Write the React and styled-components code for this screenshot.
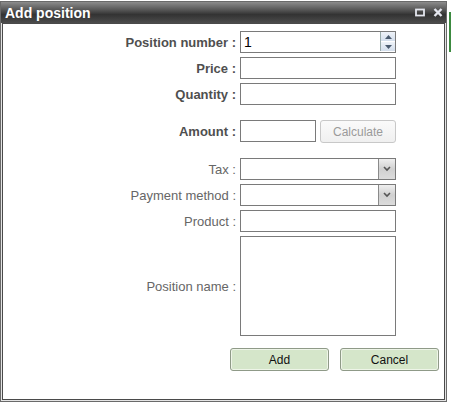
import React from "react";
import styled, {createGlobalStyle} from "styled-components";

const GlobalStyle = createGlobalStyle`
    html, body {
        margin: 0;
        padding: 0;
        background: #ffffff;
    }
    body {
        font-family: "Liberation Sans", Arial, sans-serif;
    }
`;

const Page = styled.div`
    width: 451px;
    height: 404px;
    background: #fff linear-gradient(#3c8a40, #3c8a40) no-repeat 449px 12px / 2px 40px;
    padding-top: 1px;
    box-sizing: border-box;
`;

const Window = styled.div`
    width: 447px;
    height: 401px;
    box-sizing: border-box;
    border: 1px solid #6a6a6a;
    padding: 0 1px 1px 1px;
    background: #e4e4e4;
    display: flex;
    flex-direction: column;
`;

const TitleBar = styled.div`
    height: 21px;
    display: flex;
    align-items: center;
    justify-content: space-between;
    padding: 0 3px 0 4px;
    margin: 0 -1px;
    background: linear-gradient(#8c8c8c 0%, #5a5a5a 35%, #333 60%, #4c4c4c 100%);
`;

const Title = styled.span`
    color: #fff;
    font-weight: bold;
    font-size: 14px;
`;

const Tools = styled.div`
    display: flex;
    gap: 8px;
    align-items: center;
`;

const Content = styled.div`
    flex: 1;
    border: 1px solid #4a4a4a;
    background: #fff;
    padding: 7px 3px 0 0;
    box-sizing: border-box;
`;

const Form = styled.div`
    display: grid;
    grid-template-columns: 233px 156px;
    column-gap: 4px;
    row-gap: 4px;
    align-items: center;
`;

const Label = styled.label`
    text-align: right;
    font-size: 13px;
    color: ${p => (p.$strong ? "#4f4f4f" : "#666")};
    font-weight: ${p => (p.$strong ? "bold" : "normal")};
    margin-top: ${p => p.$gap || 0}px;
`;

const Field = styled.div`
    position: relative;
    display: flex;
    gap: 4px;
    margin-top: ${p => p.$gap || 0}px;
`;

const Input = styled.div`
    box-sizing: border-box;
    width: ${p => p.$w || 156}px;
    height: ${p => p.$h || 22}px;
    border: 1px solid #7a7a7a;
    background: #fff;
    font-size: 14px;
    color: #000;
    padding: 3px 3px;
    line-height: 14px;
`;

const Spinner = styled.div`
    position: absolute;
    right: 1px;
    top: 1px;
    display: flex;
    flex-direction: column;
    gap: 1px;
    border-left: 1px solid #9aa;
`;

const SpinButton = styled.div`
    width: 14px;
    height: 9px;
    background: linear-gradient(#eef2f8, #d3deec);
    display: flex;
    align-items: center;
    justify-content: center;
`;

const DropArrow = styled.div`
    position: absolute;
    right: 1px;
    top: 1px;
    width: 17px;
    height: 20px;
    border-left: 1px solid #8a8a8a;
    box-sizing: border-box;
    background: linear-gradient(#efefef, #d0d0d0 50%, #dcdcdc);
    display: flex;
    align-items: center;
    justify-content: center;
`;

const Button = styled.button`
    box-sizing: border-box;
    width: ${p => p.$w || 99}px;
    height: 23px;
    border-radius: 3px;
    font-family: "Liberation Sans", Tahoma, sans-serif;
    font-size: 12px;
    padding: 0;
    border: 1px solid ${p => (p.$disabled ? "#c8c8c8" : "#8f9a88")};
    background: ${p => (p.$disabled ? "linear-gradient(#fafafa, #f0f0f0)" : "#d5e6ca")};
    color: ${p => (p.$disabled ? "#9a9a9a" : "#111")};
    box-shadow: ${p => (p.$disabled ? "none" : "inset 0 0 0 1px #eef5e8")};
`;

const Footer = styled.div`
    display: flex;
    justify-content: flex-end;
    gap: 11px;
    padding-right: 2px;
    margin-top: 12px;
`;

const TriUp = () => (
    <svg width="7" height="4" viewBox="0 0 7 4"><path d="M0 4 L3.5 0 L7 4 Z" fill="#4a5a6e"/></svg>
);

const TriDown = () => (
    <svg width="7" height="4" viewBox="0 0 7 4"><path d="M0 0 L3.5 4 L7 0 Z" fill="#4a5a6e"/></svg>
);

const Chevron = () => (
    <svg width="8" height="6" viewBox="0 0 8 6"><path d="M1 1 L4 4 L7 1" stroke="#555" strokeWidth="1.6" fill="none"/></svg>
);

const App = () => (
    <>
        <GlobalStyle/>
        <Page>
            <Window>
                <TitleBar>
                    <Title>Add position</Title>
                    <Tools>
                        <svg width="10" height="9" viewBox="0 0 10 9">
                            <rect x="1" y="1.5" width="8" height="6" fill="none" stroke="#e4e6ee" strokeWidth="1.8"/>
                        </svg>
                        <svg width="10" height="9" viewBox="0 0 10 9">
                            <path d="M1.5 1 L8.5 8 M8.5 1 L1.5 8" stroke="#e4e6ee" strokeWidth="2.4"/>
                        </svg>
                    </Tools>
                </TitleBar>
                <Content>
                    <Form>
                        <Label $strong>Position number :</Label>
                        <Field>
                            <Input>1</Input>
                            <Spinner>
                                <SpinButton><TriUp/></SpinButton>
                                <SpinButton><TriDown/></SpinButton>
                            </Spinner>
                        </Field>

                        <Label $strong>Price :</Label>
                        <Field><Input/></Field>

                        <Label $strong>Quantity :</Label>
                        <Field><Input/></Field>

                        <Label $strong $gap={11}>Amount :</Label>
                        <Field $gap={11}>
                            <Input $w={76}/>
                            <Button $w={76} $disabled>Calculate</Button>
                        </Field>

                        <Label $gap={11}>Tax :</Label>
                        <Field $gap={11}>
                            <Input/>
                            <DropArrow><Chevron/></DropArrow>
                        </Field>

                        <Label>Payment method :</Label>
                        <Field>
                            <Input/>
                            <DropArrow><Chevron/></DropArrow>
                        </Field>

                        <Label>Product :</Label>
                        <Field><Input/></Field>

                        <Label>Position name :</Label>
                        <Field><Input $h={100}/></Field>
                    </Form>
                    <Footer>
                        <Button>Add</Button>
                        <Button>Cancel</Button>
                    </Footer>
                </Content>
            </Window>
        </Page>
    </>
);

export default App;
